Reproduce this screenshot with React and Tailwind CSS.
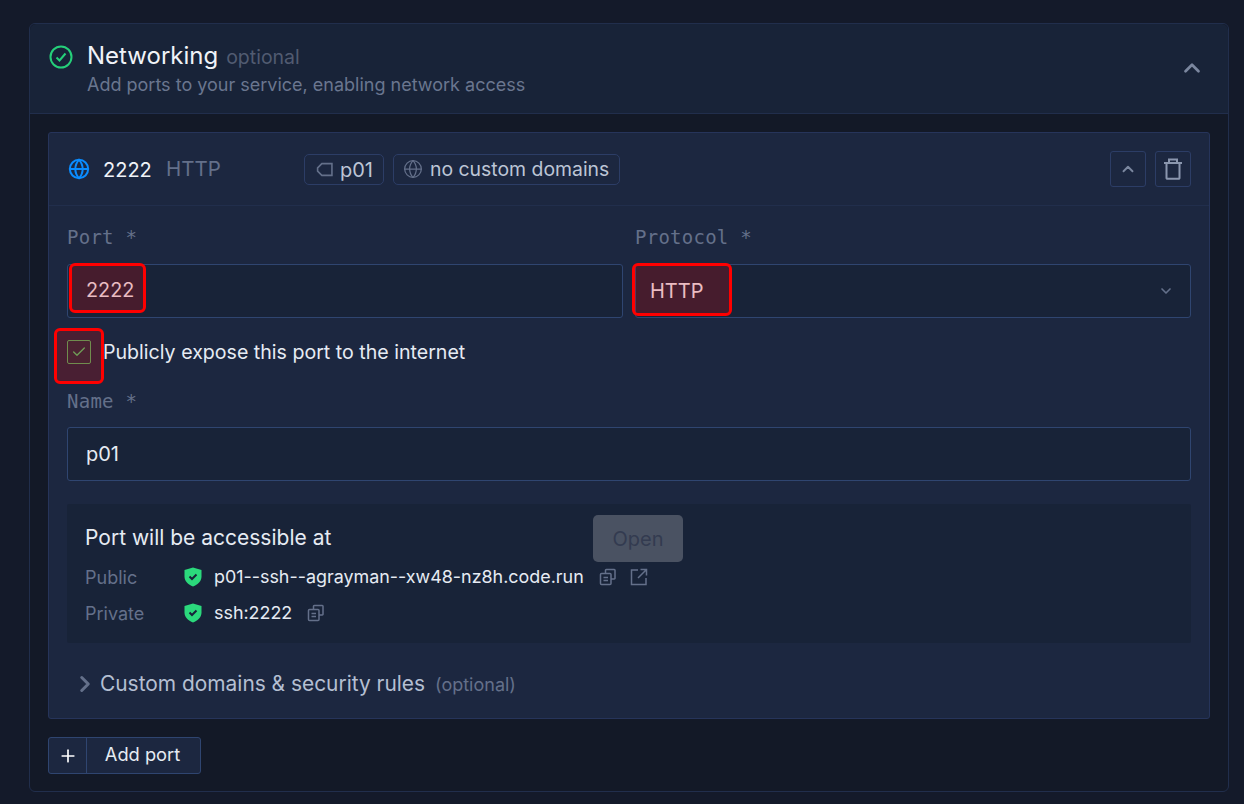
import { ChevronDown, ChevronRight, ChevronUp, Check, Globe, Plus } from "lucide-react";

const sans = "font-['Inter','Liberation_Sans',sans-serif]";
const mono = "font-['DejaVu_Sans_Mono','Liberation_Mono',monospace]";

function Mark({ className }) {
  return (
    <div
      className={`absolute rounded-[6px] border-[3px] border-[#f00] bg-[#f00]/20 ${className}`}
    />
  );
}

function Label({ children, className = "" }) {
  return (
    <div className={`${mono} text-[19px] leading-[24px] tracking-[0.25px] text-[#64708a] ${className}`}>
      {children}
    </div>
  );
}

function CopyIcon({ className = "" }) {
  return (
    <svg viewBox="0 0 18 18" fill="none" stroke="#64708a" strokeWidth="1.5" className={`w-[18px] h-[18px] ${className}`}>
      <path d="M6.5 5V2.2a.7.7 0 0 1 .7-.7h8.1a.7.7 0 0 1 .7.7v8.1a.7.7 0 0 1-.7.7H12" />
      <rect x="1.5" y="5.5" width="10.5" height="11" rx="1" />
      <path d="M4.5 9.5h4.5M4.5 12.5h4.5" />
    </svg>
  );
}

function ShieldIcon() {
  return (
    <svg viewBox="0 0 18 20" className="w-[18px] h-[20px]">
      <path d="M9 0.5 17.5 3v6.5c0 4.8-3.6 8.2-8.5 10-4.900-1.800-8.500-5.200-8.500-10V3z" fill="#2bd97c" />
      <path d="M5.500 9.500 8 12l4.500-4.500" fill="none" stroke="#18233a" strokeWidth="2" />
    </svg>
  );
}

export default function App() {
  return (
    <div className={`${sans} relative h-[804px] overflow-hidden bg-[#141a2a] pt-[23px] pl-[29px] pr-[15px]`}>
      <div className="h-[769px] rounded-[6px] border border-[#212e4c] bg-[#131927]">
        <div className="flex h-[90px] items-center justify-between rounded-t-[6px] border-b border-[#212e4c] bg-[#182338] pb-[2px] pl-[19px] pr-[23px]">
          <div className="flex items-start">
            <svg viewBox="0 0 24 24" fill="none" stroke="#25d07a" strokeWidth="2" className="mt-[6px] h-[24px] w-[24px]">
              <circle cx="12" cy="12" r="10.500" />
              <path d="m7.500 12.500 3 3 6-7" />
            </svg>
            <div className="ml-[14px]">
              <div className="flex items-baseline">
                <span className="text-[24px] leading-[34px] text-[#f0f3f8]">Networking</span>
                <span className="ml-[8px] text-[19.5px] text-[#515b71]">optional</span>
              </div>
              <div className="text-[18px] leading-[24px] text-[#6a768f]">
                Add ports to your service, enabling network access
              </div>
            </div>
          </div>
          <ChevronUp className="h-[26px] w-[26px] text-[#7b879f]" strokeWidth={2.500} />
        </div>

        <div className="px-[18px] pt-[18px]">
          <div className="h-[587px] rounded-[3px] border border-[#26345a] bg-[#1c2740]">
            <div className="flex h-[73px] items-center border-b border-[#212e4c] pl-[19px] pr-[18px]">
              <Globe className="h-[22px] w-[22px] text-[#0a8cff]" strokeWidth={2.200} />
              <span className="ml-[13px] w-[63px] pt-[1px] text-[20px] text-[#f0f3f8]">2222</span>
              <span className="w-[138px] pt-[1px] text-[20.5px] text-[#64708a]">HTTP</span>
              <div className="flex h-[31px] items-center rounded-[5px] border border-[#2c3d66] pl-[11px] pr-[10px]">
                <svg viewBox="0 0 16 14" fill="none" stroke="#64708a" strokeWidth="1.500" className="h-[15px] w-[17px]">
                  <path d="M15 1.500H5.500L1.500 5.500v3l4 4H15z" />
                </svg>
                <span className="ml-[7px] pt-[1px] text-[20px] text-[#bcc5d6]">p01</span>
              </div>
              <div className="ml-[9px] flex h-[31px] items-center rounded-[5px] border border-[#2c3d66] pl-[9px] pr-[10px]">
                <Globe className="h-[20px] w-[20px] text-[#64708a]" strokeWidth={1.500} />
                <span className="ml-[7px] pt-[1px] text-[19.400px] text-[#bcc5d6]">no custom domains</span>
              </div>
              <div className="ml-auto flex h-[36px] w-[36px] items-center justify-center rounded-[3px] border border-[#2c3d66]">
                <ChevronUp className="h-[18px] w-[18px] text-[#7b879f]" strokeWidth={2.500} />
              </div>
              <div className="ml-[9px] flex h-[36px] w-[36px] items-center justify-center rounded-[3px] border border-[#2c3d66]">
                <svg viewBox="0 0 20 22" fill="none" stroke="#8a96ae" strokeWidth="2" className="h-[22px] w-[20px]">
                  <path d="M1 5h18M6 5V1.500h8V5M3.500 5v15a.8.8 0 0 0 .8.8h11.400a.8.8 0 0 0 .8-.8V5" />
                </svg>
              </div>
            </div>

            <div className="pl-[18px] pr-[18px]">
              <div className="mt-[19px] grid grid-cols-2 gap-x-[12px]">
                <div>
                  <Label>Port *</Label>
                  <div className="mt-[15px] flex h-[54px] items-center rounded-[3px] border border-[#2f4570] bg-[#182338] pl-[18px] text-[19.800px] text-[#e6ebf3]">
                    2222
                  </div>
                </div>
                <div>
                  <Label>Protocol *</Label>
                  <div className="mt-[15px] flex h-[54px] items-center justify-between rounded-[3px] border border-[#2f4570] bg-[#182338] pl-[14px] pr-[16px] text-[20px] text-[#e6ebf3]">
                    HTTP
                    <ChevronDown className="h-[16px] w-[16px] text-[#64708a]" strokeWidth={2.500} />
                  </div>
                </div>
              </div>

              <div className="mt-[22px] flex h-[24px] items-center">
                <div className="flex h-[24px] w-[24px] items-center justify-center rounded-[2px] border border-[#4caf62] bg-[#1f2a3f]">
                  <Check className="h-[16px] w-[16px] text-[#4cc46c]" strokeWidth={2} />
                </div>
                <span className="ml-[12px] pt-[2px] text-[19.600px] text-[#e6ebf3]">Publicly expose this port to the internet</span>
              </div>

              <Label className="mt-[25px]">Name *</Label>
              <div className="mt-[14px] flex h-[54px] items-center rounded-[3px] border border-[#2f4570] bg-[#182338] pl-[18px] text-[20px] text-[#e6ebf3]">
                p01
              </div>

              <div className="mt-[23px] h-[139px] rounded-[2px] bg-[#182338] pl-[18px] pt-[21px]">
                <div className="text-[21px] leading-[26px] text-[#e6ebf3]">Port will be accessible at</div>
                <div className="mt-[12px] flex h-[28px] items-center">
                  <span className="w-[99px] text-[18px] text-[#64708a]">Public</span>
                  <ShieldIcon />
                  <span className="ml-[12px] text-[17.900px] text-[#e6ebf3]">p01--ssh--agrayman--xw48-nz8h.code.run</span>
                  <CopyIcon className="ml-[15px]" />
                  <svg viewBox="0 0 18 18" fill="none" stroke="#64708a" strokeWidth="1.500" className="ml-[13px] h-[18px] w-[18px]">
                    <path d="M8 2H1.500v14.500H16V10M10.500 1.500h6v6M16.500 1.500 8 10" />
                  </svg>
                </div>
                <div className="mt-[8px] flex h-[28px] items-center">
                  <span className="w-[99px] text-[18px] text-[#64708a]">Private</span>
                  <ShieldIcon />
                  <span className="ml-[12px] text-[17.900px] text-[#e6ebf3]">ssh:2222</span>
                  <CopyIcon className="ml-[15px]" />
                </div>
              </div>

              <div className="mt-[25px] flex items-center">
                <ChevronRight className="ml-[5px] h-[26px] w-[26px] text-[#64708a]" strokeWidth={2.800} />
                <span className="ml-[2px] text-[20.900px] text-[#b4bfd2]">Custom domains &amp; security rules</span>
                <span className="ml-[10px] mt-[2px] text-[18px] text-[#64708a]">(optional)</span>
              </div>
            </div>
          </div>

          <div className="mt-[18px] flex h-[37px] w-[153px] rounded-[3px] border border-[#2f4570] bg-[#1c2740]">
            <div className="flex w-[38px] items-center justify-center border-r border-[#2f4570]">
              <Plus className="h-[20px] w-[20px] text-white" strokeWidth={2} />
            </div>
            <div className="flex flex-1 items-center justify-center pr-[2px] pb-[2px] text-[18.300px] text-[#e6ebf3]">Add port</div>
          </div>
        </div>
      </div>

      <Mark className="left-[69px] top-[263px] h-[50px] w-[77px]" />
      <Mark className="left-[632px] top-[263px] h-[53px] w-[100px]" />
      <Mark className="left-[54px] top-[328px] h-[56px] w-[50px]" />
      <div className="absolute left-[593px] top-[515px] flex h-[47px] w-[90px] items-center justify-center rounded-[5px] bg-[#4a5262] text-[20px] text-[#333b50]">
        Open
      </div>
    </div>
  );
}
